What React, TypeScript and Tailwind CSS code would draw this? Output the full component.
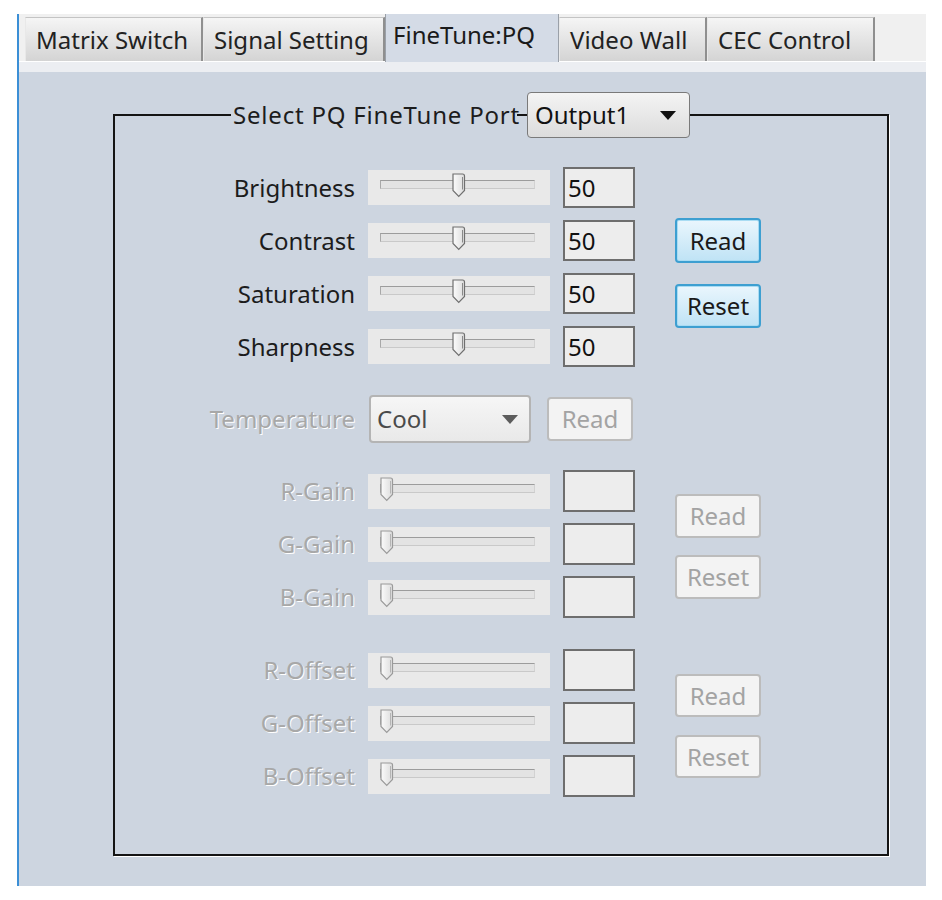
import React from "react";

function Thumb({ disabled }: { disabled?: boolean }) {
  return (
    <svg width="14" height="25" viewBox="0 0 14 25">
      <defs>
        <linearGradient id={disabled ? "tgd" : "tg"} x1="0" y1="0" x2="1" y2="0">
          <stop offset="0" stopColor="#fbfbfb" />
          <stop offset="1" stopColor="#dcdcdc" />
        </linearGradient>
      </defs>
      <path
        d="M1 1 H10.5 Q12.5 1 12.5 3 V17.5 L6.75 23.5 L1 17.5 Z"
        fill={`url(#${disabled ? "tgd" : "tg"})`}
        stroke={disabled ? "#9a9a9a" : "#6f6f6f"}
        strokeWidth="1.2"
      />
      <path d="M10.5 4 V16.5" stroke={disabled ? "#b5b5b5" : "#8a8a8a"} strokeWidth="1" />
    </svg>
  );
}

function Slider({ mid, disabled }: { mid?: boolean; disabled?: boolean }) {
  return (
    <div className="relative w-[182px] h-[35px] bg-[#e9e9e9]">
      <div className="absolute left-[12px] top-[10px] w-[155px] h-[9px] border-t border-l border-t-[#9c9c9c] border-l-[#a8a8a8] border-b border-r border-b-[#c9c9c9] border-r-[#d2d2d2] bg-[#e3e3e3]" />
      <div className={`absolute top-[3px] ${mid ? "left-[84px]" : "left-[12px]"}`}>
        <Thumb disabled={disabled} />
      </div>
    </div>
  );
}

function NumBox({ value, h }: { value?: string; h: string }) {
  return (
    <div className={`w-[72px] ${h} border-2 border-[#6e6e6e] bg-[#ededed] pl-[3px] flex items-center text-[24px] leading-none text-[#111]`}>
      {value}
    </div>
  );
}

function Label({ text, disabled }: { text: string; disabled?: boolean }) {
  return (
    <div
      className={`w-[240px] text-right text-[24px] leading-none ${
        disabled ? "text-[#a8a8a8] [text-shadow:1px_1px_0_#ffffff]" : "text-[#1c1c1c]"
      }`}
    >
      {text}
    </div>
  );
}

function Row({ label, value, disabled, h }: { label: string; value?: string; disabled?: boolean; h: string }) {
  return (
    <div className={`flex items-center ${h}`}>
      <Label text={label} disabled={disabled} />
      <div className="ml-[13px]">
        <Slider mid={!disabled} disabled={disabled} />
      </div>
      <div className="ml-[13px]">
        <NumBox value={value} h={h} />
      </div>
    </div>
  );
}

function ActiveButton({ text, h }: { text: string; h: string }) {
  return (
    <div
      className={`w-[86px] ${h} rounded-[4px] border-2 border-[#3d9fd1] bg-linear-to-b from-[#eaf6fd] to-[#bfe3f5] flex items-center justify-center text-[24px] leading-none text-[#1a1a1a] shadow-[inset_0_0_0_1px_#a9dcf3]`}
    >
      {text}
    </div>
  );
}

function DisabledButton({ text, h }: { text: string; h: string }) {
  return (
    <div
      className={`w-[86px] ${h} rounded-[4px] border-2 border-[#bcbcbc] bg-[#f3f3f3] flex items-center justify-center text-[24px] leading-none text-[#a3a3a3]`}
    >
      {text}
    </div>
  );
}

function Arrow({ color }: { color: string }) {
  return (
    <svg width="16" height="9" viewBox="0 0 16 9">
      <path d="M0 0 H16 L8 9 Z" fill={color} />
    </svg>
  );
}

function Tab({ text, w }: { text: string; w: string }) {
  return (
    <div
      className={`${w} h-[44px] mt-[3px] border-t border-l border-t-[#c4c4c4] border-l-[#e8e8e8] border-r-2 border-r-[#8f8f8f] bg-linear-to-b from-[#f5f5f5] to-[#d4d4d4] pl-[10px] flex items-center text-[24px] leading-none text-[#222]`}
    >
      {text}
    </div>
  );
}

export default function App() {
  return (
    <div className="min-h-[900px] bg-white pt-[14px] pl-[17px] font-['Noto_Sans',sans-serif]">
      <div className="w-[909px] h-[872px] border-l-2 border-[#3b8fd6] flex flex-col">
        {/* tab strip */}
        <div className="h-[48px] bg-[#f0f0f0] border-b border-white flex items-start pl-[6px]">
          <Tab text="Matrix Switch" w="w-[178px]" />
          <Tab text="Signal Setting" w="w-[182px]" />
          <div className="relative w-[174px] h-[48px] border-l border-r border-[#9aa0a8] bg-[#d4dbe6] pl-[7px] pb-[6px] flex items-center text-[24px] leading-none text-[#1a1a1a]">
            FineTune:PQ
          </div>
          <Tab text="Video Wall" w="w-[148px]" />
          <Tab text="CEC Control" w="w-[168px]" />
        </div>
        <div className="h-[10px] bg-[#eceef2]" />
        {/* content */}
        <div className="flex-1 bg-[#cdd5e0] pt-[20px] pl-[94px] pr-[37px] pb-[30px] flex">
          <fieldset className="flex-1 border-2 border-[#141414] shadow-[1px_1px_0_#ffffff]">
            <legend className="ml-[116px]">
              <div className="flex items-center">
                <span className="w-[286px] text-[24px] tracking-[0.8px] leading-none text-[#1c1c1c] pl-[2px] whitespace-nowrap">
                  Select PQ FineTune Port
                </span>
                <div className="w-[10px] h-[2px] bg-[#141414]" />
                <div className="w-[163px] h-[46px] rounded-[4px] border border-[#7a7a7a] bg-linear-to-b from-[#f4f4f4] to-[#dcdcdc] flex items-center justify-between pl-[7px] pr-[13px]">
                  <span className="text-[24px] leading-none text-[#111]">Output1</span>
                  <Arrow color="#111111" />
                </div>
              </div>
            </legend>

            {/* Section 1 */}
            <div className="flex pt-[29px]">
              <div className="flex flex-col gap-[12px]">
                <Row label="Brightness" value="50" h="h-[41px]" />
                <Row label="Contrast" value="50" h="h-[41px]" />
                <Row label="Saturation" value="50" h="h-[41px]" />
                <Row label="Sharpness" value="50" h="h-[41px]" />
              </div>
              <div className="ml-[40px] pt-[51px] flex flex-col gap-[21px]">
                <ActiveButton text="Read" h="h-[45px]" />
                <ActiveButton text="Reset" h="h-[44px]" />
              </div>
            </div>

            {/* Temperature */}
            <div className="flex items-center mt-[28px] h-[48px]">
              <Label text="Temperature" disabled />
              <div className="ml-[14px] w-[162px] h-[48px] rounded-[4px] border-2 border-[#b4b4b4] bg-linear-to-b from-[#f6f6f6] to-[#e9e9e9] flex items-center justify-between pl-[6px] pr-[11px]">
                <span className="text-[24px] leading-none text-[#4a4a4a]">Cool</span>
                <Arrow color="#5c5c5c" />
              </div>
              <div className="ml-[16px]">
                <DisabledButton text="Read" h="h-[44px]" />
              </div>
            </div>

            {/* Gains */}
            <div className="flex mt-[27px]">
              <div className="flex flex-col gap-[11px]">
                <Row label="R-Gain" disabled h="h-[42px]" />
                <Row label="G-Gain" disabled h="h-[42px]" />
                <Row label="B-Gain" disabled h="h-[42px]" />
              </div>
              <div className="ml-[40px] pt-[24px] flex flex-col gap-[17px]">
                <DisabledButton text="Read" h="h-[44px]" />
                <DisabledButton text="Reset" h="h-[44px]" />
              </div>
            </div>

            {/* Offsets */}
            <div className="flex mt-[31px]">
              <div className="flex flex-col gap-[11px]">
                <Row label="R-Offset" disabled h="h-[42px]" />
                <Row label="G-Offset" disabled h="h-[42px]" />
                <Row label="B-Offset" disabled h="h-[42px]" />
              </div>
              <div className="ml-[40px] pt-[25px] flex flex-col gap-[18px]">
                <DisabledButton text="Read" h="h-[43px]" />
                <DisabledButton text="Reset" h="h-[43px]" />
              </div>
            </div>
          </fieldset>
        </div>
      </div>
    </div>
  );
}
